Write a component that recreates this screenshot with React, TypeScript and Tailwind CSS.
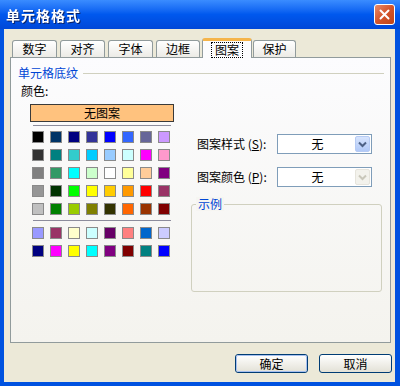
const FONT = { fontFamily: '"Noto Sans CJK SC", "Noto Sans", sans-serif' };

const TOP_ROWS = [
  ["#000000", "#003366", "#000080", "#333399", "#0000ff", "#3366ff", "#666699", "#cc99ff"],
  ["#333333", "#008080", "#33cccc", "#00ccff", "#99ccff", "#ccffff", "#ff00ff", "#ff99cc"],
  ["#808080", "#339966", "#00ffff", "#ccffcc", "#ffffff", "#ffff99", "#ffcc99", "#800080"],
  ["#969696", "#003300", "#00ff00", "#ffff00", "#ffcc00", "#ff9900", "#ff0000", "#993366"],
  ["#c0c0c0", "#008000", "#99cc00", "#808000", "#333300", "#ff6600", "#993300", "#800000"],
];

const BOTTOM_ROWS = [
  ["#9999ff", "#993366", "#ffffcc", "#ccffff", "#660066", "#ff8080", "#0066cc", "#ccccff"],
  ["#000080", "#ff00ff", "#ffff00", "#00ffff", "#800080", "#800000", "#008080", "#0000ff"],
];

const TABS = [
  { label: "数字", cls: "ml-[8px] w-[45px]" },
  { label: "对齐", cls: "ml-[3px] w-[45px]" },
  { label: "字体", cls: "ml-[3px] w-[45px]" },
  { label: "边框", cls: "ml-[3px] w-[44px]" },
  { label: "图案", cls: "ml-[2px] w-[50px]", active: true },
  { label: "保护", cls: "ml-[1px] w-[43px]" },
];

function Swatches({ rows }: { rows: string[][] }) {
  return (
    <div className="grid grid-cols-[repeat(8,12px)] gap-[6px] ml-[12px]">
      {rows.flat().map((c, i) => (
        <div key={i} className="w-[12px] h-[12px] border border-[#8a8a8a]" style={{ backgroundColor: c }} />
      ))}
    </div>
  );
}

function Chevron({ color }: { color: string }) {
  return (
    <svg width="9" height="7" viewBox="0 0 9 7">
      <path d="M1 1.5 L4.5 5 L8 1.5" fill="none" stroke={color} strokeWidth="2" />
    </svg>
  );
}

function Combo({ disabled }: { disabled?: boolean }) {
  return (
    <div className="w-[95px] h-[20px] border border-[#7f9db9] bg-white flex items-center">
      <span className="flex-1 text-center text-[12px] text-black leading-none pl-[2px]">无</span>
      {disabled ? (
        <div className="w-[15px] h-[16px] mr-[1px] rounded-[2px] bg-[#f3f2ec] border border-[#e6e4dc] flex items-center justify-center">
          <Chevron color="#c9c7ba" />
        </div>
      ) : (
        <div className="w-[15px] h-[16px] mr-[1px] rounded-[2px] bg-gradient-to-b from-[#d7e4fd] to-[#b1c9f7] border border-[#b6cbf4] flex items-center justify-center">
          <Chevron color="#4d6185" />
        </div>
      )}
    </div>
  );
}

function XpButton({ label, def }: { label: string; def?: boolean }) {
  return (
    <div className="w-[73px] h-[19px] rounded-[3px] border border-[#003c74] bg-gradient-to-b from-[#ffffff] to-[#e3e1d6] flex items-center justify-center">
      <div
        className={
          "w-full h-full rounded-[2px] flex items-center justify-center text-[12px] text-black leading-none " +
          (def ? "border border-[#a7c0ef]" : "")
        }
      >
        {label}
      </div>
    </div>
  );
}

export default function App() {
  return (
    <div className="w-[400px] h-[386px] bg-[#0052e0] flex flex-col select-none" style={FONT}>
      {/* Title bar */}
      <div className="h-[29px] bg-gradient-to-b from-[#3a8cff] via-[#0058ee] to-[#0047d8] flex items-center pl-[6px] pr-[5px]">
        <span className="text-white font-bold text-[14px] leading-none tracking-[1px] drop-shadow-[1px_1px_0_#0a246a]">
          单元格格式
        </span>
        <div className="ml-auto w-[21px] h-[21px] rounded-[3px] border border-white bg-gradient-to-br from-[#e88a68] via-[#d4542a] to-[#c04416] flex items-center justify-center">
          <svg width="11" height="11" viewBox="0 0 11 11">
            <path d="M1.5 1.5 L9.5 9.5 M9.5 1.5 L1.5 9.5" stroke="white" strokeWidth="2" strokeLinecap="round" />
          </svg>
        </div>
      </div>

      {/* Body */}
      <div className="ml-[4px] w-[391px] h-[353px] bg-[#ece9d8] flex flex-col">
        {/* Tabs */}
        <div className="flex items-end h-[28px] relative z-10">
          {TABS.map((t) =>
            t.active ? (
              <div
                key={t.label}
                className={
                  t.cls +
                  " h-[20px] -mb-px bg-[#fcfcfe] border-x border-[#919b9c] rounded-t-[3px] border-t-[3px] border-t-[#f5b44a] flex items-start justify-center pt-[1px]"
                }
              >
                <span className="text-[12px] leading-[12px] text-black border border-dotted border-black px-[3px] py-[1px]">
                  {t.label}
                </span>
              </div>
            ) : (
              <div
                key={t.label}
                className={
                  t.cls +
                  " h-[17px] bg-gradient-to-b from-[#ffffff] to-[#ecebe6] border border-b-0 border-[#919b9c] rounded-t-[3px] flex items-center justify-center text-[12px] text-black leading-none"
                }
              >
                {t.label}
              </div>
            )
          )}
        </div>

        {/* Panel */}
        <div className="ml-[6px] w-[381px] h-[286px] border border-[#919b9c] bg-gradient-to-b from-[#fcfcfe] to-[#f4f3ee] flex flex-col">
          <div className="flex items-center mt-[8px] ml-[7px] mr-[6px] h-[14px]">
            <span className="text-[12px] leading-none text-[#0046d5]">单元格底纹</span>
            <div className="flex-1 h-px bg-[#d0d0bf] ml-[5px]" />
          </div>

          <div className="flex">
            {/* Left column */}
            <div className="w-[170px] ml-[9px] flex flex-col">
              <div className="mt-[4px] h-[14px] ml-[1px] text-[12px] leading-[14px] text-black">颜色:</div>
              <div className="mt-[6px] ml-[10px] w-[144px] h-[18px] bg-[#ffc27e] border border-[#3a3a3a] flex items-center justify-center text-[12px] leading-none text-black">
                无图案
              </div>
              <div className="mt-[3px] ml-[13px] w-[138px] h-px bg-[#8c8c9c]" />
              <div className="mt-[5px]">
                <Swatches rows={TOP_ROWS} />
              </div>
              <div className="mt-[5px] ml-[13px] w-[138px] h-px bg-[#8c8c9c]" />
              <div className="mt-[6px]">
                <Swatches rows={BOTTOM_ROWS} />
              </div>
            </div>

            {/* Right column */}
            <div className="flex flex-col ml-[1px]">
              <div className="mt-[54px] flex items-center">
                <span className="w-[80px] ml-[6px] text-[12px] leading-none text-black">图案样式 (<span className="underline">S</span>):</span>
                <Combo />
              </div>
              <div className="mt-[13px] flex items-center">
                <span className="w-[80px] ml-[6px] text-[12px] leading-none text-black">图案颜色 (<span className="underline">P</span>):</span>
                <Combo disabled />
              </div>
              <div className="relative mt-[17px] w-[191px] h-[88px] border border-[#d0d0bf] rounded-[3px]">
                <span className="absolute -top-[8px] left-[4px] px-[2px] bg-[#f6f5f1] text-[12px] leading-[14px] text-[#0046d5]">
                  示例
                </span>
              </div>
            </div>
          </div>
        </div>

        {/* Buttons */}
        <div className="mt-[11px] flex justify-end gap-[11px] pr-[3px]">
          <XpButton label="确定" def />
          <XpButton label="取消" />
        </div>
      </div>
    </div>
  );
}
